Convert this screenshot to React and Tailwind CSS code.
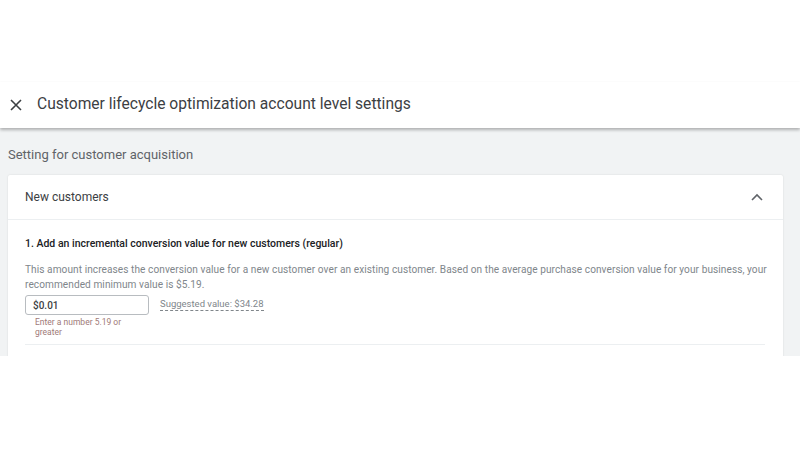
import React from 'react';

const CloseIcon = () => (
    <svg width="12" height="12" viewBox="0 0 12 12" fill="none">
        <path d="M1 1 L11 11 M11 1 L1 11" stroke="#3c4043" strokeWidth="1.6" />
    </svg>
);

const ChevronUp = () => (
    <svg width="12" height="8" viewBox="0 0 12 8" fill="none">
        <path d="M1 7 L6 2 L11 7" stroke="#5f6368" strokeWidth="1.6" />
    </svg>
);

const App = () => {
    return (
        <div className="w-[800px] h-[450px] bg-white overflow-hidden font-['Roboto',sans-serif]">
            <div className="h-[82px]" />

            <div className="relative z-10 h-[46px] flex items-center bg-white shadow-[0_2px_3px_rgba(0,0,0,0.28)]">
                <div className="w-[37px] flex justify-center pr-[6px]">
                    <CloseIcon />
                </div>
                <h1 className="text-[15.6px] text-[#3c4043]">
                    Customer lifecycle optimization account level settings
                </h1>
            </div>

            <div className="h-[228px] bg-[#f1f3f4] overflow-hidden pl-[8px] pr-[17px]">
                <p className="pt-[18px] pb-[11px] text-[13px] leading-[18px] text-[#5f6368]">
                    Setting for customer acquisition
                </p>

                <div className="bg-white rounded-[2px] shadow-[0_0_2px_rgba(0,0,0,0.12)]">
                    <div className="h-[45px] flex items-center justify-between pl-[17px] pr-[20px] border-b border-[#eceff1]">
                        <span className="text-[12px] text-[#3c4043]">New customers</span>
                        <ChevronUp />
                    </div>

                    <div className="pl-[17px] pr-[14px] pt-[17px]">
                        <h2 className="text-[10.5px] leading-[14px] font-medium text-[#202124]">
                            1. Add an incremental conversion value for new customers (regular)
                        </h2>
                        <p className="mt-[11px] text-[10.1px] tracking-[0.07px] leading-[15px] text-[#80868b]">
                            This amount increases the conversion value for a new customer over an existing customer. Based on the average purchase conversion value for your business, your recommended minimum value is $5.19.
                        </p>

                        <div className="mt-[3px] flex items-start gap-[11px]">
                            <div>
                                <div className="w-[124px] h-[20px] flex items-center px-[7px] border border-[#b8bcc0] rounded-[3px]">
                                    <span className="text-[10px] font-medium text-[#3c4043]">$0.01</span>
                                </div>
                                <p className="w-[100px] pl-[10px] mt-[3px] text-[8.5px] leading-[9.5px] text-[#a07a78]">
                                    Enter a number 5.19 or greater
                                </p>
                            </div>
                            <span className="mt-[3px] text-[9.5px] leading-[12px] text-[#80868b] border-b border-dashed border-[#80868b]">
                                Suggested value: $34.28
                            </span>
                        </div>

                        <div className="mt-[7px] mr-[4px] border-t border-[#eceff1]" />
                        <div className="h-[20px]" />
                    </div>
                </div>
            </div>
        </div>
    );
};

export default App;
